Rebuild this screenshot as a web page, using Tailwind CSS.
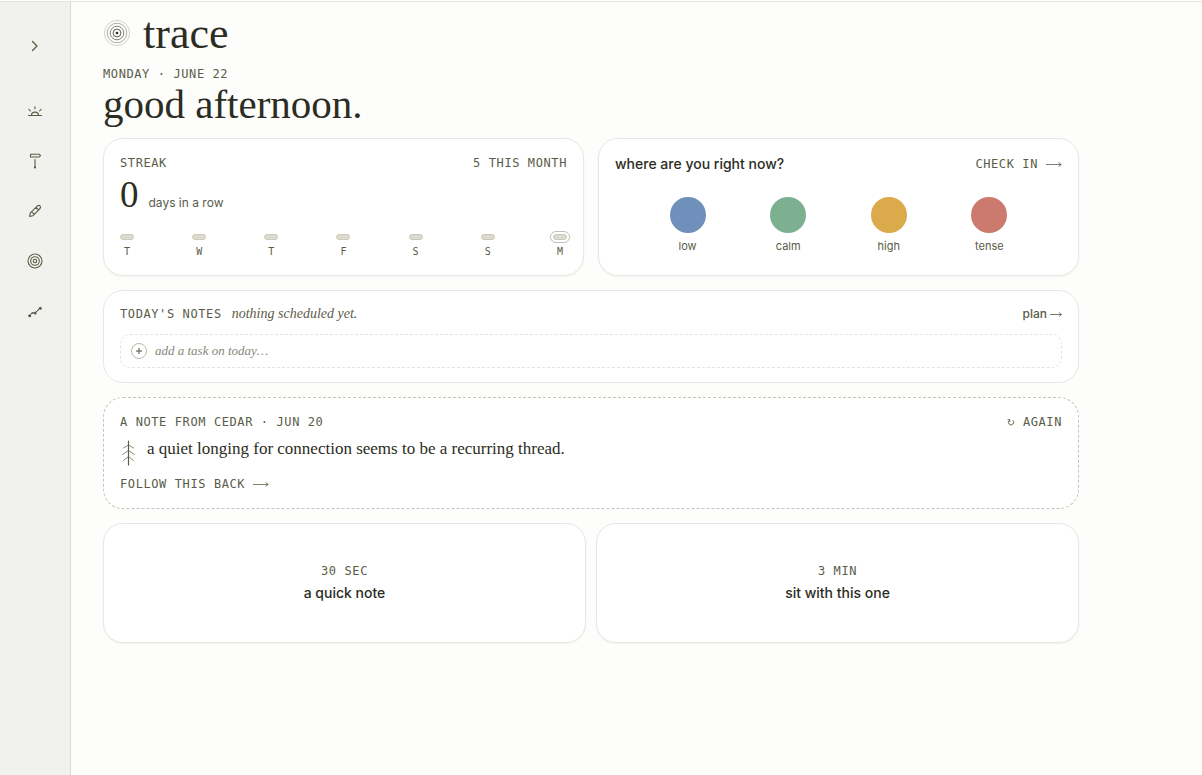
<!DOCTYPE html>
<html lang="en">
  <head>
    <meta charset="UTF-8" />
    <meta name="viewport" content="width=device-width, initial-scale=1.0" />
    <script src="https://cdn.jsdelivr.net/npm/@tailwindcss/browser@4"></script>
    <title>trace</title>
  </head>
  <body class="flex min-h-screen flex-col bg-[#fdfdfb] font-['Inter',sans-serif] text-[#2b2d23]">
    <div class="h-[2px] border-b border-[#e4e5e0]"></div>

    <div class="flex grow">
      <!-- Sidebar -->
      <nav class="flex w-[71px] shrink-0 flex-col items-center border-r border-[#d9dad3] bg-[#f1f2ed] pt-6 text-[#5a5c48]">
        <button aria-label="Expand menu" class="mb-[25px] flex size-10 items-center justify-center">
          <svg class="size-4" viewBox="0 0 16 16" fill="none" stroke="currentColor" stroke-width="1.3" stroke-linecap="round" stroke-linejoin="round"><path d="M5.500 3.500 10 8l-4.500 4.500" /></svg>
        </button>
        <div class="flex flex-col gap-[10px]">
          <a href="#" aria-label="Today" class="flex size-10 items-center justify-center">
            <svg class="size-4" viewBox="0 0 16 16" fill="none" stroke="currentColor" stroke-width="1.1" stroke-linecap="round"><path d="M1.500 12.500h13M4.500 12.300a3.500 3.200 0 0 1 7 0M8 3.800v1.900M1.900 6.400l1.500 1.400M14.100 6.400l-1.500 1.400" /></svg>
          </a>
          <a href="#" aria-label="Plan" class="flex size-10 items-center justify-center">
            <svg class="size-4" viewBox="0 0 16 16" fill="none" stroke="currentColor" stroke-width="1.1" stroke-linecap="round" stroke-linejoin="round"><path d="M3.500 1.200h8.700l1.300 1.400-1.300 1.400H3.500zM8 6.500v7.500" /><circle cx="8" cy="14.400" r=".6" fill="currentColor" /></svg>
          </a>
          <a href="#" aria-label="Write" class="flex size-10 items-center justify-center">
            <svg class="size-4" viewBox="0 0 16 16" fill="none" stroke="currentColor" stroke-width="1.1" stroke-linecap="round" stroke-linejoin="round"><path d="M2.600 13.400l.6-3.300 7.200-7.200a1.600 1.600 0 0 1 2.600 2.600L5.800 12.800zM9 4.300l2.600 2.600M4.600 8.800l2.600 2.600" /></svg>
          </a>
          <a href="#" aria-label="Rings" class="flex size-10 items-center justify-center">
            <svg class="size-4" viewBox="0 0 16 16" fill="none" stroke="currentColor" stroke-width="1.1"><circle cx="8" cy="8" r="7" /><circle cx="8" cy="8" r="4.300" /><circle cx="8" cy="8" r="1.700" /></svg>
          </a>
          <a href="#" aria-label="Patterns" class="flex size-10 items-center justify-center pt-0.5">
            <svg class="size-4" viewBox="0 0 16 16" fill="none" stroke="currentColor" stroke-width="1"><path d="M2.700 11.600 5 8.800l3 .2 2.700-2.600 2.700-2.600" /><g fill="currentColor" stroke="none"><circle cx="2.700" cy="11.700" r="1.500" /><circle cx="8.100" cy="8.900" r="1.500" /><circle cx="13.300" cy="4.200" r="1.500" /><circle cx="5.300" cy="8.900" r=".8" /><circle cx="10.800" cy="6.600" r=".8" /></g></svg>
          </a>
        </div>
      </nav>

      <!-- Main -->
      <main class="grow px-8 pt-2">
        <div class="max-w-[976px]">
          <header>
            <div class="flex items-center gap-3">
              <svg class="mb-0.5 size-7" viewBox="0 0 28 28" fill="none" stroke="#4c4e3c" stroke-width="1"><circle cx="14" cy="14" r="12.600" opacity=".25" /><circle cx="14" cy="14" r="9.800" opacity=".45" /><circle cx="14" cy="14" r="6.800" opacity=".7" /><circle cx="14" cy="14" r="3.900" opacity=".9" /><circle cx="14" cy="14" r="1.300" fill="#2b2d23" stroke="none" /></svg>
              <span class="font-['Liberation_Serif',serif] text-[44px] leading-[48px]">trace</span>
            </div>
            <p class="mt-2 font-['DejaVu_Sans_Mono',monospace] text-xs tracking-wider text-[#5a5c48] uppercase">Monday · June 22</p>
            <h1 class="font-['Liberation_Serif',serif] text-[41px] leading-[44px]">good afternoon.</h1>
          </header>

          <div class="mt-3 flex flex-col gap-[14px]">
            <div class="grid grid-cols-2 gap-[14px]">
              <!-- Streak -->
              <section class="rounded-[20px] border border-[#e7e8e4] bg-white p-4 shadow-xs">
                <div class="flex justify-between font-['DejaVu_Sans_Mono',monospace] text-xs tracking-wider text-[#5a5c48] uppercase">
                  <h2>Streak</h2>
                  <span>5 this month</span>
                </div>
                <p class="mt-1 flex items-baseline gap-[10px]">
                  <span class="font-['Liberation_Serif',serif] text-[37px] leading-[40px]">0</span>
                  <span class="text-xs text-[#5a5c48]">days in a row</span>
                </p>
                <ul class="mt-[19px] flex justify-between font-['DejaVu_Sans_Mono',monospace] text-[10px] leading-[14px] text-[#5a5c48]">
                  <li class="flex flex-col items-center gap-[5px]"><span class="h-[6px] w-[14px] rounded-full border border-[#cfcab4] bg-[#dadbd2]"></span>T</li>
                  <li class="flex flex-col items-center gap-[5px]"><span class="h-[6px] w-[14px] rounded-full border border-[#cfcab4] bg-[#dadbd2]"></span>W</li>
                  <li class="flex flex-col items-center gap-[5px]"><span class="h-[6px] w-[14px] rounded-full border border-[#cfcab4] bg-[#dadbd2]"></span>T</li>
                  <li class="flex flex-col items-center gap-[5px]"><span class="h-[6px] w-[14px] rounded-full border border-[#cfcab4] bg-[#dadbd2]"></span>F</li>
                  <li class="flex flex-col items-center gap-[5px]"><span class="h-[6px] w-[14px] rounded-full border border-[#cfcab4] bg-[#dadbd2]"></span>S</li>
                  <li class="flex flex-col items-center gap-[5px]"><span class="h-[6px] w-[14px] rounded-full border border-[#cfcab4] bg-[#dadbd2]"></span>S</li>
                  <li class="flex flex-col items-center gap-[5px]"><span class="h-[6px] w-[14px] rounded-full border border-[#cfcab4] bg-[#dadbd2] outline outline-offset-2 outline-[#bfc0b6]"></span>M</li>
                </ul>
              </section>

              <!-- Check in -->
              <section class="rounded-[20px] border border-[#e7e8e4] bg-white p-4 shadow-xs">
                <div class="flex items-center justify-between">
                  <h2 class="text-sm leading-[18px] font-medium">where are you right now?</h2>
                  <a href="#" class="flex items-center gap-2 font-['DejaVu_Sans_Mono',monospace] text-xs tracking-wider text-[#5a5c48] uppercase">
                    Check in
                    <svg class="h-2 w-4" viewBox="0 0 16 8" fill="none" stroke="currentColor" stroke-width=".8"><path d="M0 4.500h15M12.500 2.500l2.700 2-2.700 2" /></svg>
                  </a>
                </div>
                <div class="mt-6 flex justify-evenly text-[11px] leading-[14px] text-[#5a5c48]">
                  <button class="flex w-14 flex-col items-center gap-[6px]"><span class="size-9 rounded-full bg-[#6f90bb]"></span>low</button>
                  <button class="flex w-14 flex-col items-center gap-[6px]"><span class="size-9 rounded-full bg-[#7db091]"></span>calm</button>
                  <button class="flex w-14 flex-col items-center gap-[6px]"><span class="size-9 rounded-full bg-[#dbaa4b]"></span>high</button>
                  <button class="flex w-14 flex-col items-center gap-[6px]"><span class="size-9 rounded-full bg-[#cb7a6d]"></span>tense</button>
                </div>
              </section>
            </div>

            <!-- Notes -->
            <section class="rounded-[20px] border border-[#e7e8e4] bg-white px-4 py-[14px]">
              <div class="flex items-center justify-between">
                <div class="flex items-baseline gap-[10px]">
                  <h2 class="font-['DejaVu_Sans_Mono',monospace] text-xs tracking-wider text-[#5a5c48] uppercase">Today's notes</h2>
                  <p class="font-['Liberation_Serif',serif] text-sm leading-[18px] text-[#5a5c48] italic">nothing scheduled yet.</p>
                </div>
                <a href="#" class="flex items-center gap-[3px] text-xs font-medium text-[#5a5c48]">
                  plan
                  <svg class="h-2 w-3" viewBox="0 0 12 8" fill="none" stroke="currentColor" stroke-width=".8"><path d="M0 4.500h11.500M9 2.500l2.600 2-2.600 2" /></svg>
                </a>
              </div>
              <form class="mt-[11px] flex h-[34px] items-center gap-2 rounded-[10px] border border-dashed border-[#e4e5e0] px-[10px]">
                <button aria-label="Add task" class="flex size-4 items-center justify-center rounded-full border border-[#b9bab0] text-[#4c4e3c]">
                  <svg class="size-2" viewBox="0 0 8 8" fill="none" stroke="currentColor"><path d="M1 4h6M4 1v6" /></svg>
                </button>
                <input type="text" aria-label="Task" placeholder="add a task on today…" class="grow bg-transparent font-['Liberation_Serif',serif] text-[13px] italic outline-none placeholder:text-[#85877a]" />
              </form>
            </section>

            <!-- Note from cedar -->
            <section class="rounded-[20px] border border-dashed border-[#c4c5bb] bg-white p-4">
              <div class="flex items-center justify-between font-['DejaVu_Sans_Mono',monospace] text-xs tracking-wider text-[#5a5c48] uppercase">
                <h2>A note from cedar · Jun 20</h2>
                <button class="flex items-center gap-2 uppercase">
                  <svg class="size-2" viewBox="0 0 8 8" fill="none" stroke="currentColor" stroke-width=".9"><path d="M5.600 2.300a2.600 2.600 0 1 1-3.200 0M.5 1.700h2.300v2.300" /></svg>
                  Again
                </button>
              </div>
              <div class="mt-[7px] flex gap-[10px]">
                <svg class="mt-[3px] h-[26px] w-[17px]" viewBox="0 0 17 26" fill="none" stroke="#5a5c48" stroke-linecap="round"><path d="M8.500 1v24" stroke-width="1.200" /><path d="M8.500 5 3.500 8M8.500 5l5 3M8.500 10.500l-6 4M8.500 10.500l6 4M8.500 16.500l-5 4M8.500 16.500l5 4" stroke-width=".9" opacity=".8" /></svg>
                <p class="font-['Liberation_Serif',serif] text-[17px] leading-6">a quiet longing for connection seems to be a recurring thread.</p>
              </div>
              <a href="#" class="mt-[10px] flex items-center gap-2 font-['DejaVu_Sans_Mono',monospace] text-xs tracking-wider text-[#5a5c48] uppercase">
                Follow this back
                <svg class="h-2 w-4" viewBox="0 0 16 8" fill="none" stroke="currentColor" stroke-width=".8"><path d="M0 4.500h15M12.500 2.500l2.700 2-2.700 2" /></svg>
              </a>
            </section>

            <!-- Quick starts -->
            <div class="grid grid-cols-2 gap-[10px]">
              <button class="flex h-[120px] flex-col items-center justify-center gap-1 rounded-[20px] border border-[#e7e8e4] bg-white shadow-xs">
                <span class="font-['DejaVu_Sans_Mono',monospace] text-xs tracking-wider text-[#5a5c48] uppercase">30 sec</span>
                <span class="text-sm font-medium">a quick note</span>
              </button>
              <button class="flex h-[120px] flex-col items-center justify-center gap-1 rounded-[20px] border border-[#e7e8e4] bg-white shadow-xs">
                <span class="font-['DejaVu_Sans_Mono',monospace] text-xs tracking-wider text-[#5a5c48] uppercase">3 min</span>
                <span class="text-sm font-medium">sit with this one</span>
              </button>
            </div>
          </div>
        </div>
      </main>
    </div>
  </body>
</html>
